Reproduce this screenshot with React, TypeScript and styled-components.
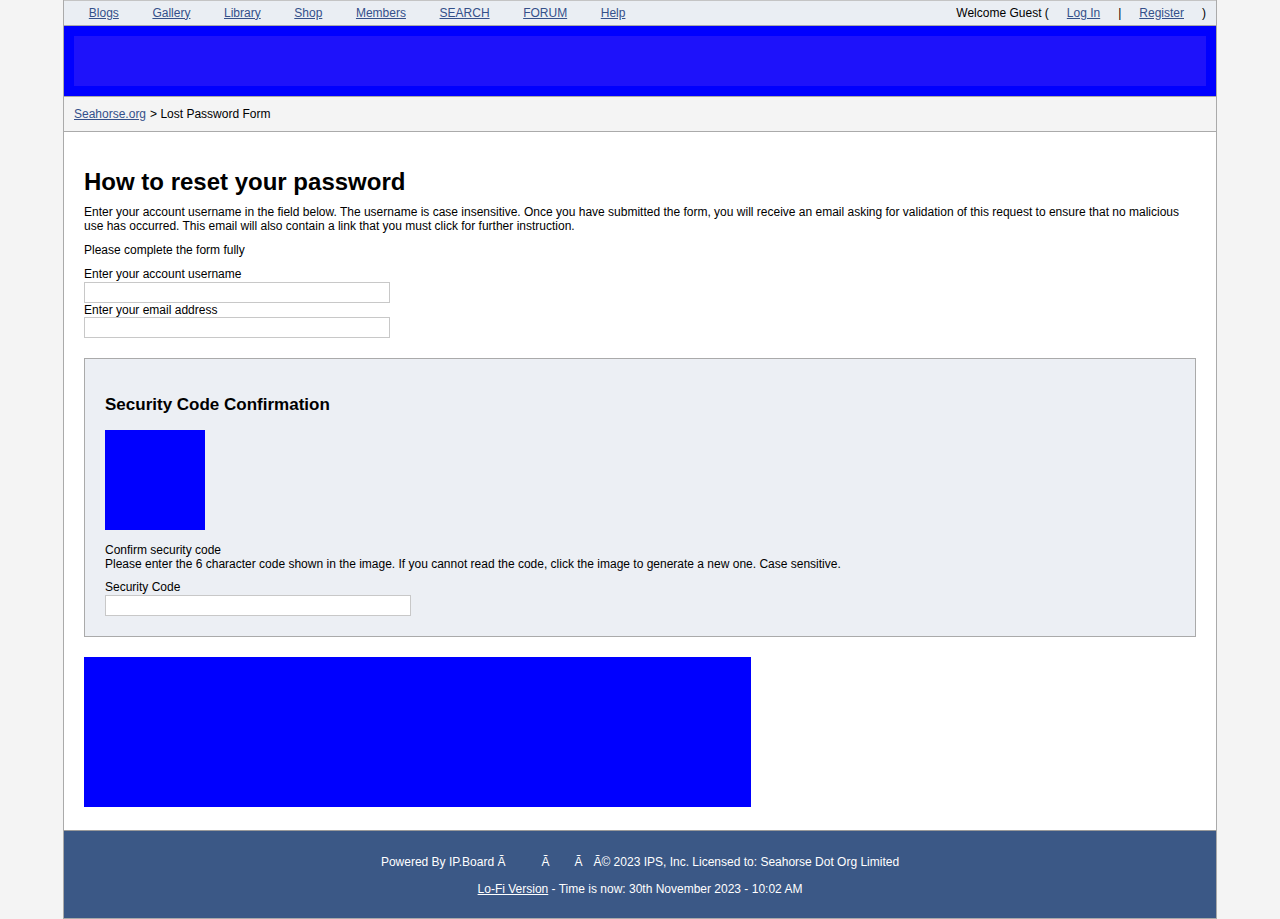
import React from "react";
import styled, { createGlobalStyle } from "styled-components";

const GlobalStyle = createGlobalStyle`
  html, body { margin: 0; padding: 0; background: #f4f4f4; }
  body { font-family: "Liberation Sans", Arial, sans-serif; font-size: 12px; color: #000; }
  * { box-sizing: border-box; }
`;

const Wrapper = styled.div`
  width: 1154px;
  margin: 0 auto;
  border: 1px solid #aaaaaa;
  border-top: none;
  background: #fff;
`;

const TopNav = styled.div`
  height: 26px;
  background: #eaeef3;
  border-top: 1px solid #c4c4c4;
  border-bottom: 1px solid #aaaaaa;
  display: flex;
  align-items: center;
  justify-content: space-between;
  padding: 0 10px 1px 8px;
  font-size: 12px;
`;

const NavList = styled.div`
  display: flex;
  align-items: center;
`;

const NavLink = styled.a`
  color: #34508a;
  text-decoration: underline;
  padding: 0 16.8px;
  cursor: pointer;
`;

const UserBar = styled.div`
  display: flex;
  align-items: center;
  gap: 18px;
  color: #000;
`;

const UserLink = styled.a`
  color: #34508a;
  text-decoration: underline;
  cursor: pointer;
`;

const Header = styled.div`
  background: #0000ff;
  padding: 10px;
  height: 70px;
`;

const HeaderInner = styled.div`
  height: 50px;
  background: #1e12fa;
`;

const Breadcrumb = styled.div`
  background: #f4f4f4;
  border-top: 1px solid #aaaaaa;
  border-bottom: 1px solid #aaaaaa;
  height: 36px;
  padding: 0 10px 1px 10px;
  display: flex;
  align-items: center;
  font-size: 12px;
`;

const CrumbLink = styled.a`
  color: #34508a;
  text-decoration: underline;
  margin-right: 4px;
`;

const Content = styled.div`
  padding: 20px 20px 23px 20px;
`;

const Title = styled.h1`
  font-size: 24px;
  line-height: 28px;
  font-weight: bold;
  margin: 16px 0 9px 0;
`;

const Para = styled.p<{ $mt?: number }>`
  margin: ${(p) => p.$mt ?? 0}px 0 0 0;
  line-height: 14px;
  font-size: 12px;
`;

const Label = styled.label<{ $mt?: number }>`
  display: block;
  margin-top: ${(p) => p.$mt ?? 0}px;
  line-height: 13px;
  font-size: 12px;
`;

const FieldLabel = styled(Label)`
  line-height: 14px;
  margin-bottom: -1px;
`;

const TextInput = styled.input`
  display: block;
  width: 306px;
  height: 21px;
  margin: 1px 0 0 0;
  padding: 2px;
  border: 1px solid #c8c8c8;
  background: #fff;
  font-size: 12px;
  outline: none;
`;

const SecurityBox = styled.div`
  margin-top: 20px;
  background: #eceff4;
  border: 1px solid #aaaaaa;
  padding: 20px;
`;

const BoxTitle = styled.h3`
  font-size: 17px;
  line-height: 20px;
  font-weight: bold;
  margin: 16px 0 15px 0;
`;

const CaptchaImage = styled.div`
  width: 100px;
  height: 100px;
  background: #0000ff;
  margin-bottom: 13px;
`;

const Banner = styled.div`
  margin-top: 20px;
  width: 667px;
  height: 150px;
  background: #0000ff;
`;

const Footer = styled.div`
  background: #3b5886;
  border-top: 1px solid #9a9a9a;
  padding: 24px 0 22px 0;
  display: flex;
  flex-direction: column;
  align-items: center;
  gap: 13px;
  color: #fff;
  font-size: 12px;
  line-height: 14px;
`;

const FooterLine = styled.div`
  white-space: nowrap;
`;

const Spacer = styled.span<{ $w: number }>`
  display: inline-block;
  width: ${(p) => p.$w}px;
`;

const FooterLink = styled.a`
  color: #fff;
  text-decoration: underline;
`;

export default function App() {
  const links = ["Blogs", "Gallery", "Library", "Shop", "Members", "SEARCH", "FORUM", "Help"];
  return (
    <>
      <GlobalStyle />
      <Wrapper>
        <TopNav>
          <NavList>
            {links.map((l) => (
              <NavLink key={l}>{l}</NavLink>
            ))}
          </NavList>
          <UserBar>
            <span>Welcome Guest (</span>
            <UserLink>Log In</UserLink>
            <span>|</span>
            <UserLink>Register</UserLink>
            <span>)</span>
          </UserBar>
        </TopNav>
        <Header>
          <HeaderInner />
        </Header>
        <Breadcrumb>
          <CrumbLink>Seahorse.org</CrumbLink>
          <span>&gt; Lost Password Form</span>
        </Breadcrumb>
        <Content>
          <Title>How to reset your password</Title>
          <Para>
            Enter your account username in the field below. The username is case insensitive. Once you have submitted the form, you will receive an email asking for validation of this request to ensure that no malicious use has occurred. This email will also contain a link that you must click for further instruction.
          </Para>
          <Para $mt={10}>Please complete the form fully</Para>
          <Label $mt={11}>Enter your account username</Label>
          <TextInput type="text" />
          <FieldLabel>Enter your email address</FieldLabel>
          <TextInput type="text" />
          <SecurityBox>
            <BoxTitle>Security Code Confirmation</BoxTitle>
            <CaptchaImage />
            <Para>Confirm security code</Para>
            <Para>
              Please enter the 6 character code shown in the image. If you cannot read the code, click the image to generate a new one. Case sensitive.
            </Para>
            <Label $mt={10}>Security Code</Label>
            <TextInput type="text" />
          </SecurityBox>
          <Banner />
        </Content>
        <Footer>
          <FooterLine>
            Powered By IP.Board Ã<Spacer $w={36} />Ã<Spacer $w={25} />Ã<Spacer $w={11} />Ã© 2023 IPS, Inc. Licensed to: Seahorse Dot Org Limited
          </FooterLine>
          <FooterLine>
            <FooterLink>Lo-Fi Version</FooterLink> - Time is now: 30th November 2023 - 10:02 AM
          </FooterLine>
        </Footer>
      </Wrapper>
    </>
  );
}
